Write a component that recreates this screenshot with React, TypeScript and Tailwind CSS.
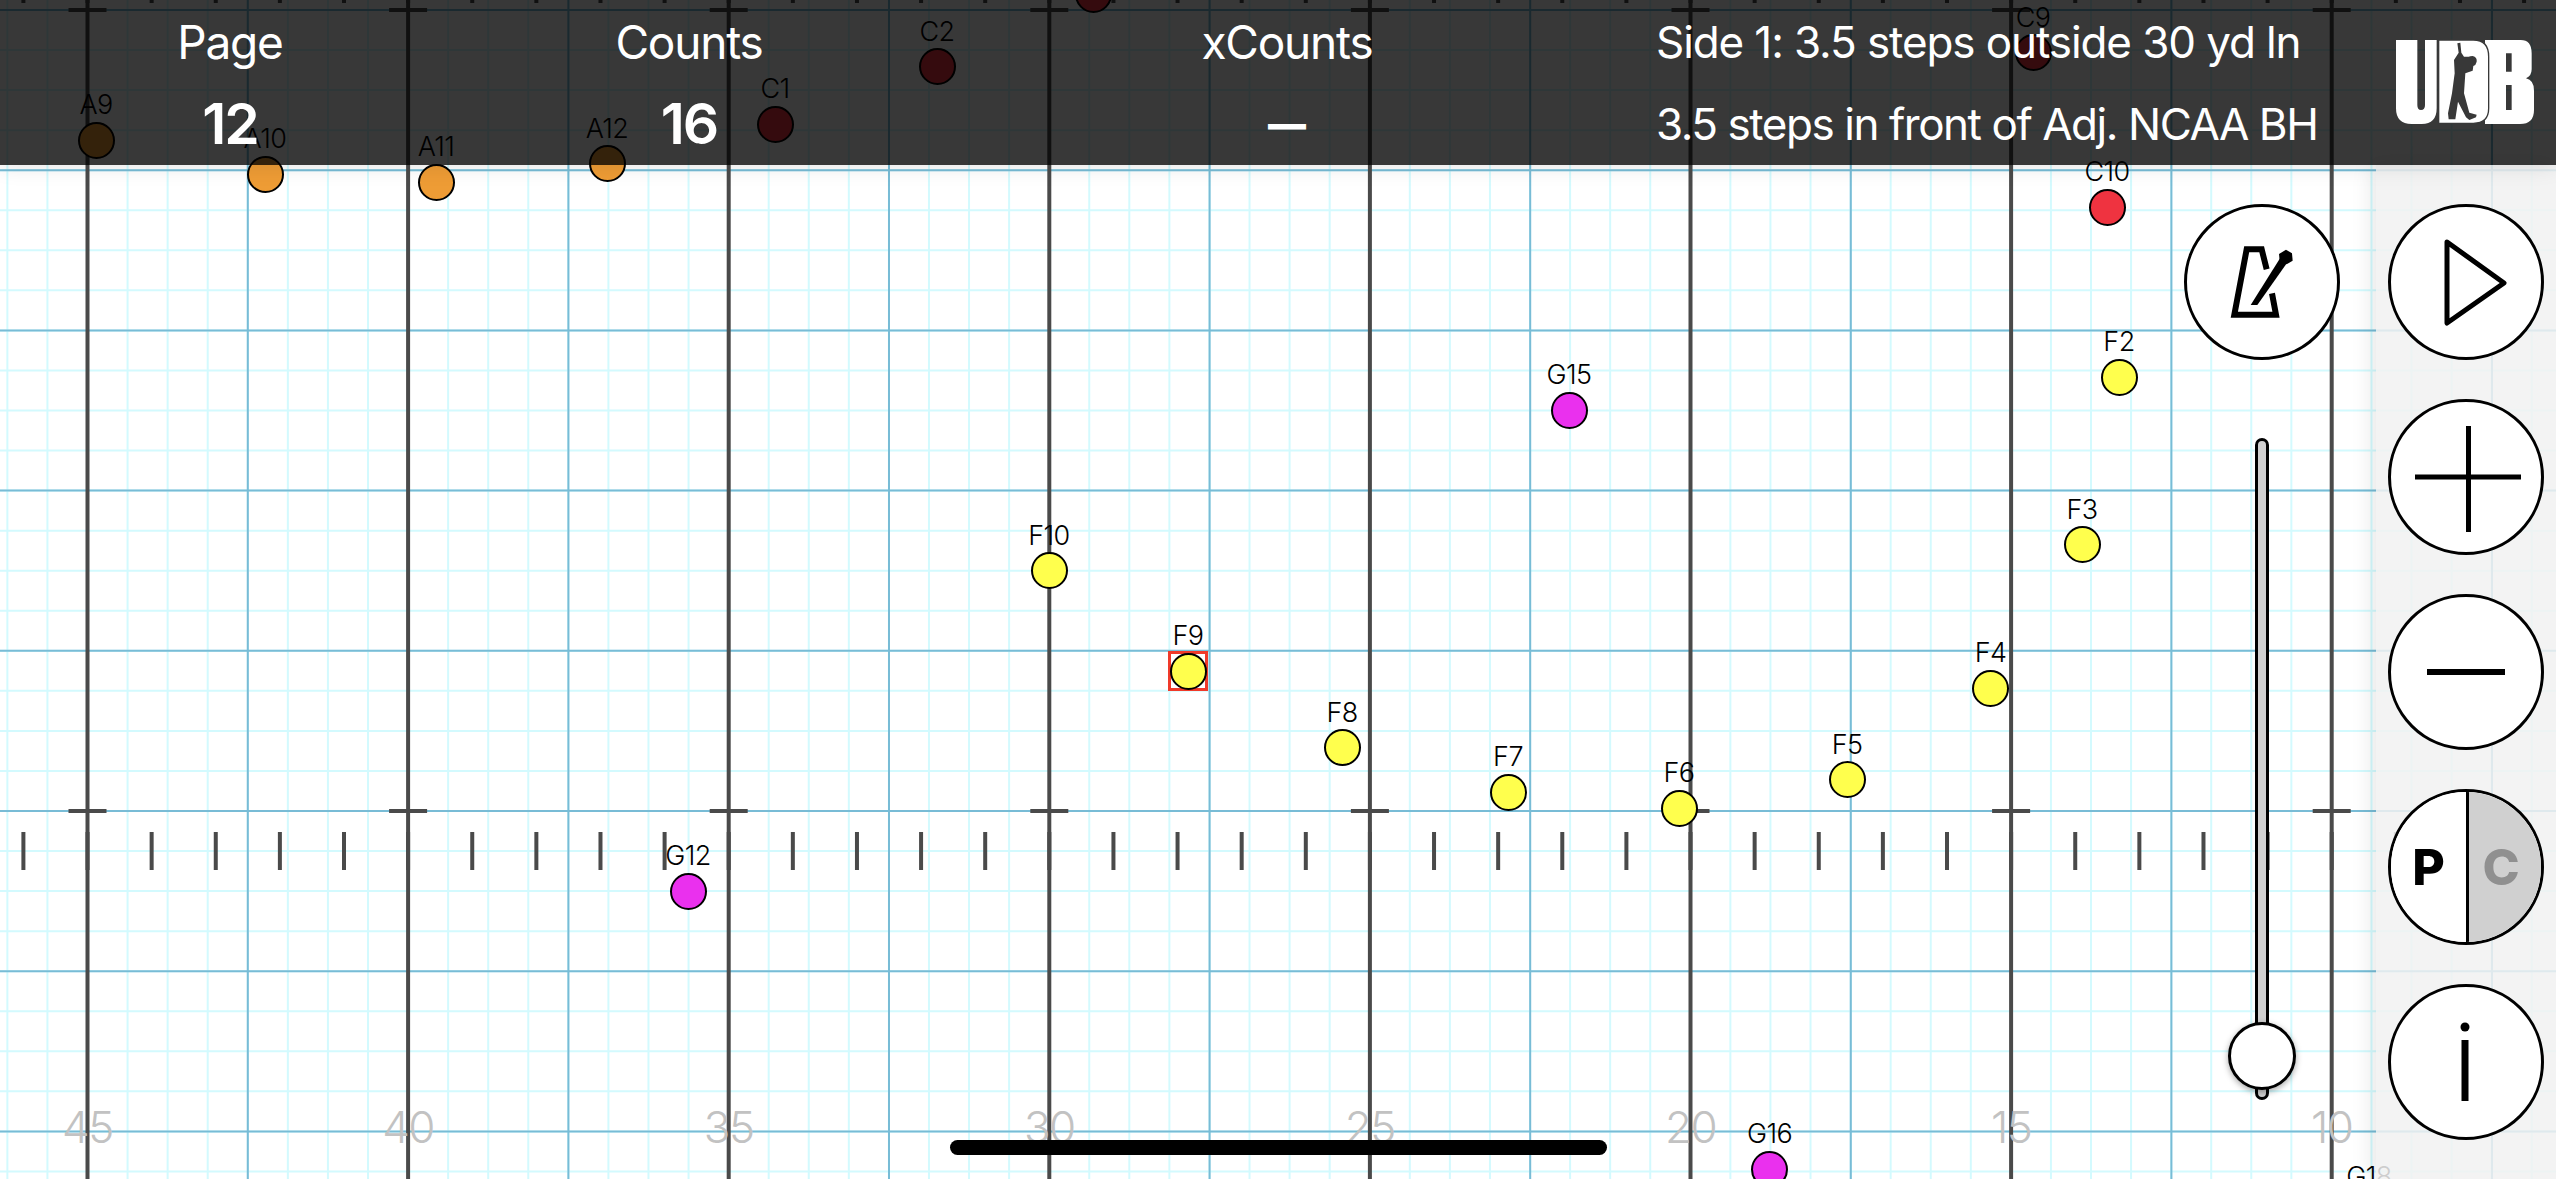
import React from "react";

const X0 = 7.36;
const DX = 40.07;
const Y0 = 10;
const DY = 40.05;
const LIGHT = "#d3fafe";
const BLUE = "#78bcd6";
const DARK = "#4a4a4a";

const xs = Array.from({ length: 64 }, (_, i) => X0 + i * DX);
const ys = Array.from({ length: 30 }, (_, i) => Y0 + i * DY);
const yards = [45, 40, 35, 30, 25, 20, 15, 10];
const yardX = (i: number) => 87.5 + i * 320.6;
const ticks = Array.from({ length: 40 }, (_, i) => 23.4 + i * 64.12);

type Node = { n: string; x: number; y: number; c: string };
const O = "#ee9c35";
const R = "#ef3340";
const Y = "#ffff4d";
const M = "#ea30ee";
const nodes: Node[] = [
  { n: "A9", x: 96, y: 140, c: O },
  { n: "A10", x: 265, y: 174, c: O },
  { n: "A11", x: 436, y: 182, c: O },
  { n: "A12", x: 607, y: 163.5, c: O },
  { n: "C1", x: 775, y: 124, c: R },
  { n: "C2", x: 937, y: 66.7, c: R },
  { n: "C3", x: 1093, y: -5.5, c: R },
  { n: "C9", x: 2033, y: 52.5, c: R },
  { n: "C10", x: 2107, y: 207, c: R },
  { n: "F2", x: 2119, y: 377.4, c: Y },
  { n: "G15", x: 1569, y: 410, c: M },
  { n: "F3", x: 2082, y: 544.5, c: Y },
  { n: "F10", x: 1049, y: 570.5, c: Y },
  { n: "F9", x: 1188, y: 671, c: Y },
  { n: "F8", x: 1342, y: 747.7, c: Y },
  { n: "F7", x: 1508, y: 792, c: Y },
  { n: "F6", x: 1679, y: 808, c: Y },
  { n: "F5", x: 1847, y: 779.5, c: Y },
  { n: "F4", x: 1990.5, y: 688, c: Y },
  { n: "G12", x: 688, y: 891, c: M },
  { n: "G16", x: 1769.6, y: 1169, c: M },
  { n: "G18", x: 2369, y: 1212, c: M },
];

function FieldGrid() {
  return (
    <svg className="absolute inset-0" width={2556} height={1179} viewBox="0 0 2556 1179">
      {xs.map((x) => (
        <line key={x} x1={x} x2={x} y1={0} y2={1179} stroke={LIGHT} strokeWidth={2} />
      ))}
      {ys.map((y) => (
        <line key={y} x1={0} x2={2556} y1={y} y2={y} stroke={LIGHT} strokeWidth={2} />
      ))}
      {ys.filter((_, i) => i % 4 === 0).map((y) => (
        <line key={y} x1={0} x2={2556} y1={y} y2={y} stroke={BLUE} strokeWidth={2} />
      ))}
      {yards.map((_, i) => (
        <line key={i} x1={yardX(i) + 160.3} x2={yardX(i) + 160.3} y1={0} y2={1179} stroke={BLUE} strokeWidth={2} />
      ))}
      {yards.map((_, i) => (
        <line key={i} x1={yardX(i)} x2={yardX(i)} y1={0} y2={1179} stroke={DARK} strokeWidth={4} />
      ))}
      {yards.map((_, i) => (
        <g key={i}>
          <rect x={yardX(i) - 19} y={8} width={38} height={4} fill={DARK} />
          <rect x={yardX(i) - 19} y={809} width={38} height={4} fill={DARK} />
        </g>
      ))}
      {ticks.map((x) => (
        <g key={x}>
          <rect x={x - 2} y={832} width={4} height={38} fill={DARK} />
          <rect x={x - 2} y={-35} width={4} height={38} fill={DARK} />
        </g>
      ))}
    </svg>
  );
}

function Marcher({ node }: { node: Node }) {
  return (
    <div className="absolute w-0 h-0" style={{ left: node.x, top: node.y }}>
      <div className="absolute bottom-[22px] left-0 -translate-x-1/2 text-[27px] leading-none font-light text-black whitespace-nowrap font-['Inter',sans-serif] tracking-[-0.6px]">
        {node.n}
      </div>
      {node.n === "F9" && (
        <div className="absolute left-[-20px] top-[-20px] w-[40px] h-[40px] border-[3.5px] border-[#f03a2a] bg-white" />
      )}
      <div
        className="absolute left-[-18.5px] top-[-18.5px] w-[37px] h-[37px] rounded-full border-[2.5px] border-black"
        style={{ background: node.c }}
      />
    </div>
  );
}

function HeaderCol({
  label,
  value,
  className,
  valueClass = "font-semibold text-[57px] tracking-[-2px]",
}: {
  label: string;
  value: string;
  className: string;
  valueClass?: string;
}) {
  return (
    <div className={`flex flex-col items-center ${className}`}>
      <div className="h-[84px] flex items-center text-[46px] leading-none tracking-[-1.2px]">{label}</div>
      <div className={`h-[79px] flex items-center leading-none ${valueClass}`}>{value}</div>
    </div>
  );
}

function Logo() {
  return (
    <svg className="w-[150px] h-[100px] mt-[30px] shrink-0" viewBox="0 0 450 300">
      <path fill="#fff" d="M18 30H82V225Q82 240 93 240Q105 240 105 225V30H140V235Q140 282 95 282H65Q18 282 18 235Z" />
      <path fill="#fff" d="M285 30H392Q425 30 425 70V118Q425 138 408 145Q432 150 432 182V240Q432 282 390 282H285ZM348 70V125H365V70ZM348 165V240H365V165Z" fillRule="evenodd" />
      <path fill="#fff" stroke="#383838" strokeWidth="4" d="M146 30H250Q296 30 296 80V235Q296 280 250 280H146Z" />
      <path fill="#383838" d="M202 40L211 38L214 68L222 80L236 80Q240 78 248 78Q262 82 260 95Q258 105 250 108L248 122L226 130L222 190L238 248L260 254L258 262L238 270L228 262L204 215L196 268L176 268L174 250L186 190L194 130L192 90L206 68Z" />
    </svg>
  );
}

function RoundButton({ children, className = "" }: { children?: React.ReactNode; className?: string }) {
  return (
    <div className={`relative w-[156px] h-[156px] rounded-full border-[3px] border-black bg-white overflow-hidden shrink-0 ${className}`}>
      {children}
    </div>
  );
}

function Icon({ children }: { children: React.ReactNode }) {
  return (
    <svg className="absolute left-[-2px] top-[-2px]" width={154} height={154} viewBox="0 0 154 154">
      {children}
    </svg>
  );
}

export default function App() {
  return (
    <div className="relative w-[2556px] h-[1179px] overflow-hidden bg-white font-['Inter',sans-serif]">
      <FieldGrid />
      {yards.map((n, i) => (
        <div
          key={n}
          className="absolute top-[1102px] -translate-x-1/2 text-[44px] leading-[50px] font-light text-[#c2c2c2] tracking-[-1.5px]"
          style={{ left: yardX(i) }}
        >
          {n}
        </div>
      ))}
      {nodes.map((n) => (
        <Marcher key={n.n} node={n} />
      ))}

      {/* Metronome */}
      <div className="absolute left-[2184px] top-[204px]">
        <RoundButton>
          <svg className="absolute left-[23px] top-[23px]" width={110} height={110} viewBox="0 0 330 330">
            <polyline points="170,118 155,58 110,58 73,254 198,254 186,190" fill="none" stroke="#000" strokeWidth="18" />
            <path d="M122 225L212 82L236 92L142 225Z" fill="#000" />
            <path d="M228 59L246 70L248 92L230 103L209 92L207 72Z" fill="#000" />
          </svg>
        </RoundButton>
      </div>

      {/* Tempo slider */}
      <div className="absolute left-[2255px] top-[438px] w-[14px] h-[662px] rounded-full border-[3px] border-black bg-[#d0d0d0]" />
      <div className="absolute left-[2228px] top-[1022px] w-[68px] h-[68px] rounded-full border-[3px] border-black bg-white shadow-[0_2px_6px_rgba(0,0,0,0.35)]" />

      {/* Right control panel */}
      <div className="absolute top-[165px] right-0 bottom-0 w-[180px] flex flex-col items-center gap-[39px] pt-[39px] bg-[rgba(241,241,241,0.85)] shadow-[-4px_0_20px_rgba(0,0,0,0.1)]">
        <RoundButton>
          <Icon>
            <path d="M58 37L115 78L58 118Z" fill="none" stroke="#000" strokeWidth="5" strokeLinejoin="round" />
          </Icon>
        </RoundButton>
        <RoundButton>
          <Icon>
            <rect x="26" y="74.5" width="106" height="5" fill="#000" />
            <rect x="77" y="26" width="5" height="106" fill="#000" />
          </Icon>
        </RoundButton>
        <RoundButton>
          <Icon>
            <rect x="38" y="74" width="78" height="6" fill="#000" />
          </Icon>
        </RoundButton>
        <RoundButton className="flex">
          <div className="w-1/2 flex-none flex items-center justify-center text-[50px] leading-none font-extrabold text-black bg-white">P</div>
          <div className="w-1/2 flex-none flex items-center justify-center pr-[8px] text-[50px] leading-none font-extrabold text-[#909090] bg-[#d0d0d0] border-l-[3px] border-black">C</div>
        </RoundButton>
        <RoundButton>
          <Icon>
            <circle cx="76" cy="42" r="4.5" fill="#000" />
            <rect x="72.5" y="55" width="7" height="61" fill="#000" />
          </Icon>
        </RoundButton>
      </div>

      {/* Translucent header */}
      <div className="absolute top-0 left-0 w-full h-[165px] flex bg-[rgba(0,0,0,0.78)] text-white shadow-[0_2px_20px_rgba(0,0,0,0.1)]">
        <HeaderCol label="Page" value="12" className="w-[460px]" />
        <HeaderCol label="Counts" value="16" className="w-[458px]" />
        <HeaderCol label="xCounts" value="—" className="w-[738px]" valueClass="font-black text-[38px]" />
        <div className="w-[734px] flex flex-col text-[44px] leading-none whitespace-nowrap">
          <div className="h-[84px] flex items-center tracking-[-1.1px]">Side 1: 3.5 steps outside 30 yd ln</div>
          <div className="h-[79px] flex items-center tracking-[-1.45px]">3.5 steps in front of Adj. NCAA BH</div>
        </div>
        <Logo />
      </div>

      {/* Home indicator */}
      <div className="absolute left-[950px] top-[1140px] w-[657px] h-[15px] rounded-full bg-black" />
    </div>
  );
}
